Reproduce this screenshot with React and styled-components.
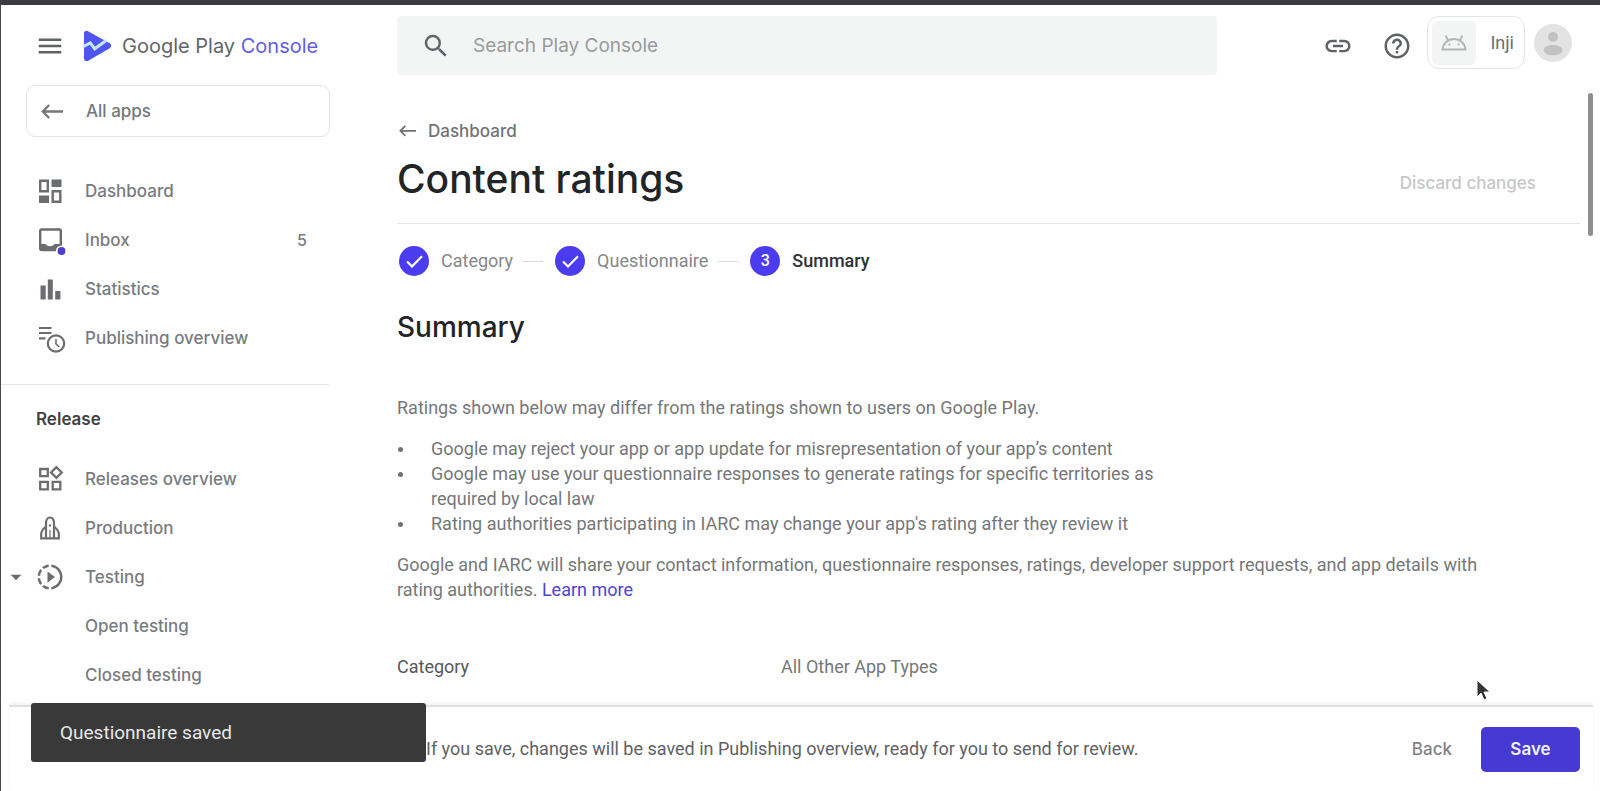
import React from "react";
import styled, { createGlobalStyle, css } from "styled-components";
import { MdLink, MdHelpOutline, MdSearch, MdMenu, MdSlowMotionVideo, MdArrowDropDown } from "react-icons/md";

const display = `Inter, "Noto Sans", sans-serif`;
const body = `Roboto, "Liberation Sans", sans-serif`;
const indigo = "#4b3cf0";

const GlobalStyle = createGlobalStyle`
  *, *::before, *::after { box-sizing: border-box; }
  body { margin: 0; background: #fff; font-family: ${body}; color: #757779; }
  h1, h2, h3, p, ul, ol, dl, dd { margin: 0; padding: 0; }
  ul, ol { list-style: none; }
  button, input { font: inherit; color: inherit; border: 0; background: none; padding: 0; }
  a { color: inherit; text-decoration: none; }
`;

const Page = styled.div`
  display: flex;
  flex-direction: column;
  height: 100vh;
  overflow: hidden;
  border-top: 5px solid #3b3a3e;
  border-left: 1px solid #4d464d;
`;

const Header = styled.header`
  display: flex;
  flex: none;
  align-items: flex-start;
  height: 80px;
  padding: 11px 28px 0 0;
`;

const Brand = styled.div`
  display: flex;
  flex: none;
  align-items: center;
  width: 396px;
  height: 60px;
  padding-left: 34px;
`;

const IconButton = styled.button`
  display: flex;
  flex: none;
  color: #5f6266;
`;

const Logo = styled.a`
  display: flex;
  align-items: center;
  gap: 10px;
  margin-left: 18px;
  font: 400 20px/30px ${display};
  color: #636569;
`;

const LogoAccent = styled.span`
  color: #625cea;
`;

const Search = styled.label`
  display: flex;
  flex: 0 1 820px;
  align-items: center;
  gap: 22px;
  height: 59px;
  padding: 0 24px;
  border-radius: 4px;
  background: #f3f4f4;
  color: #5f6266;
`;

const SearchInput = styled.input`
  flex: 1;
  min-width: 0;
  font: 400 19px/28px ${display};
  outline: 0;
  &::placeholder { color: #999b9e; opacity: 1; }
`;

const HeaderActions = styled.div`
  display: flex;
  align-items: center;
  gap: 29px;
  height: 59px;
  margin-left: auto;
`;

const Account = styled.div`
  display: flex;
  align-items: center;
  gap: 9px;
  height: 53px;
  margin-left: 15px;
`;

const AppChip = styled.button`
  display: flex;
  align-items: center;
  justify-content: space-between;
  width: 98px;
  height: 53px;
  padding: 0 10px 0 4px;
  border: 1px solid #e3e4e5;
  border-radius: 12px;
  font: 400 18px/24px ${body};
  color: #6a6d72;
`;

const AppIcon = styled.span`
  display: flex;
  align-items: center;
  justify-content: center;
  width: 44px;
  height: 44px;
  border-radius: 6px;
  background: #f3f5f4;
`;

const Body = styled.div`
  display: flex;
  flex: 1;
  min-height: 0;
`;

const Sidebar = styled.nav`
  flex: none;
  width: 396px;
  padding-right: 68px;
  overflow: hidden;
  font: 500 17px/24px ${display};
`;

const AllApps = styled.a`
  display: flex;
  align-items: center;
  gap: 23px;
  height: 52px;
  margin: 0 -1px 29px 25px;
  padding-left: 14px;
  border: 1px solid #e2e3e4;
  border-radius: 9px;
`;

const NavList = styled.ul`
  display: flex;
  flex-direction: column;
`;

const NavLink = styled.a`
  display: flex;
  align-items: center;
  height: 49px;
  padding: 0 22px 0 ${(p) => (p.$nested ? "84px" : p.$open ? "0" : "34px")};
  color: #797b7f;
`;

const NavIcon = styled.span`
  display: flex;
  flex: none;
  width: 30px;
  margin-right: 20px;
  color: #6b6d71;
`;

const Caret = styled(MdArrowDropDown)`
  flex: none;
  width: 26px;
  height: 26px;
  margin: 0 6px 0 2px;
  color: #6b6d71;
`;

const NavCount = styled.span`
  margin-left: auto;
  font-size: 16px;
`;

const NavSection = styled.h3`
  margin-top: 22px;
  padding: 22px 0 23px 35px;
  border-top: 1px solid #e6e6e7;
  font: 600 17px/24px ${display};
  color: #3f4144;
`;

const Main = styled.main`
  position: relative;
  flex: 1;
  min-width: 0;
  overflow: hidden;
  padding: 34px 20px 0 0;
`;

const ScrollThumb = styled.div`
  position: absolute;
  top: 8px;
  right: 7px;
  width: 5px;
  height: 143px;
  border-radius: 3px;
  background: #8e8f91;
`;

const Breadcrumb = styled.a`
  display: flex;
  align-items: center;
  gap: 12px;
  padding-left: 2px;
  font: 500 17px/24px ${display};
  color: #707275;
`;

const TitleRow = styled.div`
  display: flex;
  align-items: center;
  justify-content: space-between;
  height: 81px;
  padding: 0 44px 0 0;
  border-bottom: 1px solid #e3e4e5;
`;

const Title = styled.h1`
  margin-bottom: 8px;
  font: 500 39px/48px ${display};
  color: #222426;
`;

const TextButton = styled.button`
  font: 500 17px/24px ${display};
  color: #818285;
  &:disabled { color: #c6c7c9; }
`;

const Stepper = styled.ol`
  display: flex;
  align-items: center;
  height: 30px;
  margin-top: 22px;
`;

const Step = styled.li`
  display: flex;
  align-items: center;
  padding-left: 2px;
  font: 400 18px/24px ${body};
  color: #85878a;
  &:not(:first-child)::before {
    content: "";
    width: 20px;
    height: 1px;
    margin: 0 12px 0 8px;
    background: #d8d9da;
  }
  ${(p) => p.$current && css`
    font-weight: 500;
    color: #303235;
  `}
`;

const StepBadge = styled.span`
  display: flex;
  align-items: center;
  justify-content: center;
  width: 30px;
  height: 30px;
  margin-right: 12px;
  border-radius: 50%;
  background: ${indigo};
  font: 500 16px/24px ${body};
  color: #fff;
`;

const SectionTitle = styled.h2`
  margin-top: 33px;
  font: 500 28px/36px ${display};
  color: #222426;
`;

const Copy = styled.p`
  max-width: 1110px;
  margin-top: ${(p) => (p.$lead ? "50px" : "16px")};
  font: 400 18px/25px ${body};
`;

const Bullets = styled.ul`
  max-width: 768px;
  margin-top: 16px;
  font: 400 18px/25px ${body};
`;

const Bullet = styled.li`
  display: flex;
  &::before {
    content: "";
    flex: none;
    width: 5px;
    height: 5px;
    margin: 11px 28px 0 1px;
    border-radius: 50%;
    background: #717376;
  }
`;

const Link = styled.a`
  color: #5043d3;
`;

const Details = styled.dl`
  display: grid;
  grid-template-columns: 384px 1fr;
  margin-top: 52px;
  font: 400 18px/25px ${body};
`;

const Term = styled.dt`
  color: #55575a;
`;

const Footer = styled.footer`
  display: flex;
  flex: none;
  align-items: center;
  height: 86px;
  margin: 0 7px 0 8px;
  padding: 0 13px 0 417px;
  border-top: 2px solid #dedfdf;
  box-shadow: 0 -2px 3px rgba(0, 0, 0, 0.05);
  background: #fff;
  font: 400 18px/24px ${body};
  color: #606265;
`;

const FooterActions = styled.div`
  display: flex;
  align-items: center;
  gap: 29px;
  margin-left: auto;
`;

const SaveButton = styled.button`
  width: 99px;
  height: 45px;
  border-radius: 5px;
  background: #463ad3;
  font: 600 17px/24px ${display};
  color: #f1f0ff;
`;

const Toast = styled.div`
  position: fixed;
  bottom: 29px;
  left: 31px;
  display: flex;
  align-items: center;
  width: 395px;
  height: 59px;
  padding-left: 29px;
  border-radius: 3px;
  background: #39393a;
  font: 400 19px/24px ${body};
  color: #e8e8e9;
`;

const Pointer = styled.svg`
  position: fixed;
  right: 109px;
  bottom: 89px;
`;

const Glyph = ({ children }) => (
  <svg width="30" height="30" viewBox="0 0 30 30" fill="none" stroke="currentColor" strokeWidth="2.4" aria-hidden="true" overflow="visible">
    {children}
  </svg>
);

const DashboardIcon = () => (
  <Glyph>
    <path d="M5.2 4.7h7.6v10.6H5.2zM17.7 15.2h7.600v10.600h-7.600z" />
    <path d="M16.500 3.500h10v7.500h-10zM4 19.500h10V27H4z" fill="currentColor" stroke="none" />
  </Glyph>
);

const InboxIcon = () => (
  <Glyph>
    <rect x="5.2" y="4.5" width="20.6" height="20.6" rx="1.6" />
    <path d="M5 19h5.600c1.600 3 7.200 3 8.800 0H26v3.500L21 26H5z" fill="currentColor" stroke="none" />
    <circle cx="26.500" cy="26" r="5.600" fill="#fff" stroke="none" />
    <circle cx="26.500" cy="26" r="3.900" fill="#4a40d0" stroke="none" />
  </Glyph>
);

const StatisticsIcon = () => (
  <Glyph>
    <path d="M5.500 11.500h5.200v14H5.500zM12.800 5.500h5v20h-5zM20.200 17h5.200v8.500h-5.200z" fill="currentColor" stroke="none" />
  </Glyph>
);

const PublishingIcon = () => (
  <Glyph>
    <path d="M4 5h12.500M4 10h12.500M4 15.400h6.500" strokeWidth="2.2" />
    <circle cx="21" cy="20.500" r="8.200" strokeWidth="2.2" />
    <path d="M21 16v5l3.200 2.800" strokeWidth="1.6" />
  </Glyph>
);

const ReleasesIcon = () => (
  <Glyph>
    <path d="M5.200 5h7.600v7.200H5.200zM5.200 17.800h7.600v7.600H5.200zM17.700 17.800h7.600v7.600h-7.600zM21.400 3.200l5.300 5.300-5.300 5.300-5.300-5.300z" strokeWidth="2.3" />
  </Glyph>
);

const RocketIcon = () => (
  <Glyph>
    <path d="M11 25V10.500C11 7 12.600 4.500 15 4.500s4 2.500 4 6V25" strokeWidth="2.2" />
    <path d="M11 13.500C8 16 6.200 18.500 6.200 21v4.300h17.600V21c0-2.500-1.800-5-4.800-7.500" strokeWidth="2.2" />
    <path d="M15 17v8" strokeWidth="1.2" />
    <circle cx="15" cy="12.500" r="1.200" fill="currentColor" stroke="none" />
  </Glyph>
);

const PlayLogo = () => (
  <svg width="29" height="32" viewBox="0 0 29 32" aria-hidden="true">
    <path d="M1 3.500C1 1 3.200.2 5 1.200L26.300 13c2.400 1.400 2.400 4.200 0 5.600L5.200 30.700C3.200 31.800 1 30.800 1 28.500z" fill="#4f56ef" />
    <path d="M0 16.600l7.300-3.800 4.400 6 11.800-8.600" fill="none" stroke="#bfe9fb" strokeWidth="3" />
  </svg>
);

const BackArrow = ({ size = 22 }) => (
  <svg width={size} height={(size * 15) / 22} viewBox="0 0 22 15" fill="none" stroke="currentColor" strokeWidth="2.3" aria-hidden="true">
    <path d="M22 7.500H2M8.200 1L1.800 7.500l6.400 6.500" />
  </svg>
);

const Android = () => (
  <svg width="26" height="18" viewBox="0 0 26 18" fill="none" stroke="#b3b5b5" strokeWidth="1.8" aria-hidden="true">
    <path d="M1.500 15.500C2 9.500 7 5 13 5s11 4.500 11.500 10.500zM7.400 6.800L4.600 1.500M18.600 6.800l2.800-5.300" />
    <path d="M7.500 10.500h1.800M16.700 10.500h1.800" />
  </svg>
);

const Avatar = () => (
  <svg width="38" height="38" viewBox="0 0 38 38" role="img" aria-label="Account">
    <circle cx="19" cy="19" r="19" fill="#e3e3e3" />
    <circle cx="19" cy="13" r="5" fill="#c2c2c2" />
    <path d="M9.500 26c0-3 5-5 9.500-5s9.500 2 9.500 5-4 5.300-9.500 5.300S9.500 29 9.500 26z" fill="#c2c2c2" />
  </svg>
);

const Check = () => (
  <svg width="20" height="16" viewBox="0 0 20 16" fill="none" stroke="#fff" strokeWidth="2.2" aria-hidden="true">
    <path d="M3 8.500l5 5L18 3.200" />
  </svg>
);

const overview = [
  { label: "Dashboard", icon: <DashboardIcon /> },
  { label: "Inbox", icon: <InboxIcon />, count: 5 },
  { label: "Statistics", icon: <StatisticsIcon /> },
  { label: "Publishing overview", icon: <PublishingIcon /> },
];

const release = [
  { label: "Releases overview", icon: <ReleasesIcon /> },
  { label: "Production", icon: <RocketIcon /> },
  { label: "Testing", icon: <MdSlowMotionVideo size={30} />, open: true },
  { label: "Open testing", nested: true },
  { label: "Closed testing", nested: true },
];

const steps = ["Category", "Questionnaire", "Summary"];

const NavItems = ({ items }) => (
  <NavList>
    {items.map(({ label, icon, count, nested, open }) => (
      <li key={label}>
        <NavLink href="#" $nested={nested} $open={open}>
          {open && <Caret />}
          {icon && <NavIcon>{icon}</NavIcon>}
          {label}
          {count && <NavCount>{count}</NavCount>}
        </NavLink>
      </li>
    ))}
  </NavList>
);

export default function App() {
  return (
    <Page>
      <GlobalStyle />
      <Header>
        <Brand>
          <IconButton aria-label="Menu"><MdMenu size={30} /></IconButton>
          <Logo href="#">
            <PlayLogo />
            <span>Google Play <LogoAccent>Console</LogoAccent></span>
          </Logo>
        </Brand>
        <Search>
          <MdSearch size={30} aria-hidden="true" />
          <SearchInput type="search" placeholder="Search Play Console" aria-label="Search Play Console" />
        </Search>
        <HeaderActions>
          <IconButton aria-label="Copy link"><MdLink size={30} /></IconButton>
          <IconButton aria-label="Help"><MdHelpOutline size={30} /></IconButton>
        </HeaderActions>
        <Account>
          <AppChip>
            <AppIcon><Android /></AppIcon>
            Inji
          </AppChip>
          <Avatar />
        </Account>
      </Header>
      <Body>
        <Sidebar>
          <AllApps href="#"><BackArrow />All apps</AllApps>
          <NavItems items={overview} />
          <NavSection>Release</NavSection>
          <NavItems items={release} />
        </Sidebar>
        <Main>
          <Breadcrumb href="#"><BackArrow size={17} />Dashboard</Breadcrumb>
          <TitleRow>
            <Title>Content ratings</Title>
            <TextButton disabled>Discard changes</TextButton>
          </TitleRow>
          <Stepper>
            {steps.map((name, i) => (
              <Step key={name} $current={i === 2}>
                <StepBadge>{i < 2 ? <Check /> : i + 1}</StepBadge>
                {name}
              </Step>
            ))}
          </Stepper>
          <SectionTitle>Summary</SectionTitle>
          <Copy $lead>Ratings shown below may differ from the ratings shown to users on Google Play.</Copy>
          <Bullets>
            <Bullet>Google may reject your app or app update for misrepresentation of your app’s content</Bullet>
            <Bullet>Google may use your questionnaire responses to generate ratings for specific territories as required by local law</Bullet>
            <Bullet>Rating authorities participating in IARC may change your app's rating after they review it</Bullet>
          </Bullets>
          <Copy>
            Google and IARC will share your contact information, questionnaire responses, ratings, developer support
            requests, and app details with rating authorities. <Link href="#">Learn more</Link>
          </Copy>
          <Details>
            <Term>Category</Term>
            <dd>All Other App Types</dd>
          </Details>
          <ScrollThumb />
        </Main>
      </Body>
      <Footer>
        If you save, changes will be saved in Publishing overview, ready for you to send for review.
        <FooterActions>
          <TextButton>Back</TextButton>
          <SaveButton>Save</SaveButton>
        </FooterActions>
      </Footer>
      <Toast role="status">Questionnaire saved</Toast>
      <Pointer width="15" height="23" viewBox="0 0 15 23" aria-hidden="true">
        <path d="M1 1v17l4-4 3 7 3-1.500-3-6.500h6z" fill="#333" stroke="#fff" strokeWidth="1" />
      </Pointer>
    </Page>
  );
}
